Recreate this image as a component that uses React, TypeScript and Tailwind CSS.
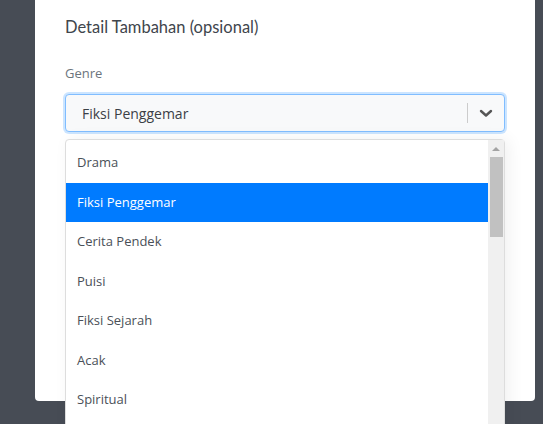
import React from "react";

const items = ["Drama", "Fiksi Penggemar", "Cerita Pendek", "Puisi", "Fiksi Sejarah", "Acak", "Spiritual"];

export default function App() {
  return (
    <div className="relative h-[424px] w-[543px] overflow-hidden bg-[#474c55]" style={{ fontFamily: '"Open Sans", sans-serif' }}>
      <div className="relative ml-[35px] h-[401px] w-[500px] rounded-b-[4px] bg-white px-[30px] pt-[16px]">
        <h2 className="text-[16.5px] font-normal leading-[22px] text-[#40454c]" style={{ fontFamily: 'Lato, "Open Sans", sans-serif' }}>
          Detail Tambahan (opsional)
        </h2>
        <div className="mt-[25px] text-[13px] leading-[20px] text-[#6c757d]">Genre</div>
        <div className="mt-[11px] flex h-[38px] w-[440px] items-center rounded-[4px] border border-[#80bdff] bg-[#f8f9fa] shadow-[0_0_0_2px_rgba(0,123,255,0.2)]">
          <span className="flex-1 pl-[16px] text-[14px] text-[#3b4046]">Fiksi Penggemar</span>
          <span className="h-[20px] w-px bg-[#cccccc]" />
          <span className="flex w-[36px] items-center justify-center">
            <svg width="14" height="9" viewBox="0 0 14 9">
              <path d="M2 2 L7 6.5 L12 2" fill="none" stroke="#555" strokeWidth="2.4" strokeLinecap="round" strokeLinejoin="round" />
            </svg>
          </span>
        </div>
        <div className="absolute left-[30px] top-[139px] flex h-[300px] w-[440px] rounded-t-[4px] border border-[#dddddd] bg-white shadow-[4px_0_16px_rgba(0,0,0,0.06)]">
          <ul className="flex-1 pt-[3px]">
            {items.map((it) => (
              <li
                key={it}
                className={`flex h-[39.5px] items-center pl-[11px] text-[13px] ${
                  it === "Fiksi Penggemar" ? "bg-[#007bff] text-white" : "text-[#4a5058]"
                }`}
              >
                {it}
              </li>
            ))}
          </ul>
          <div className="flex w-[16px] flex-col items-center bg-[#f0f0f0]">
            <div className="mt-[7px] h-0 w-0 border-x-[4px] border-b-[4px] border-x-transparent border-b-[#a3a3a3]" />
            <div className="mt-[6px] h-[80px] w-[13px] bg-[#c1c1c1]" />
          </div>
        </div>
      </div>
    </div>
  );
}
